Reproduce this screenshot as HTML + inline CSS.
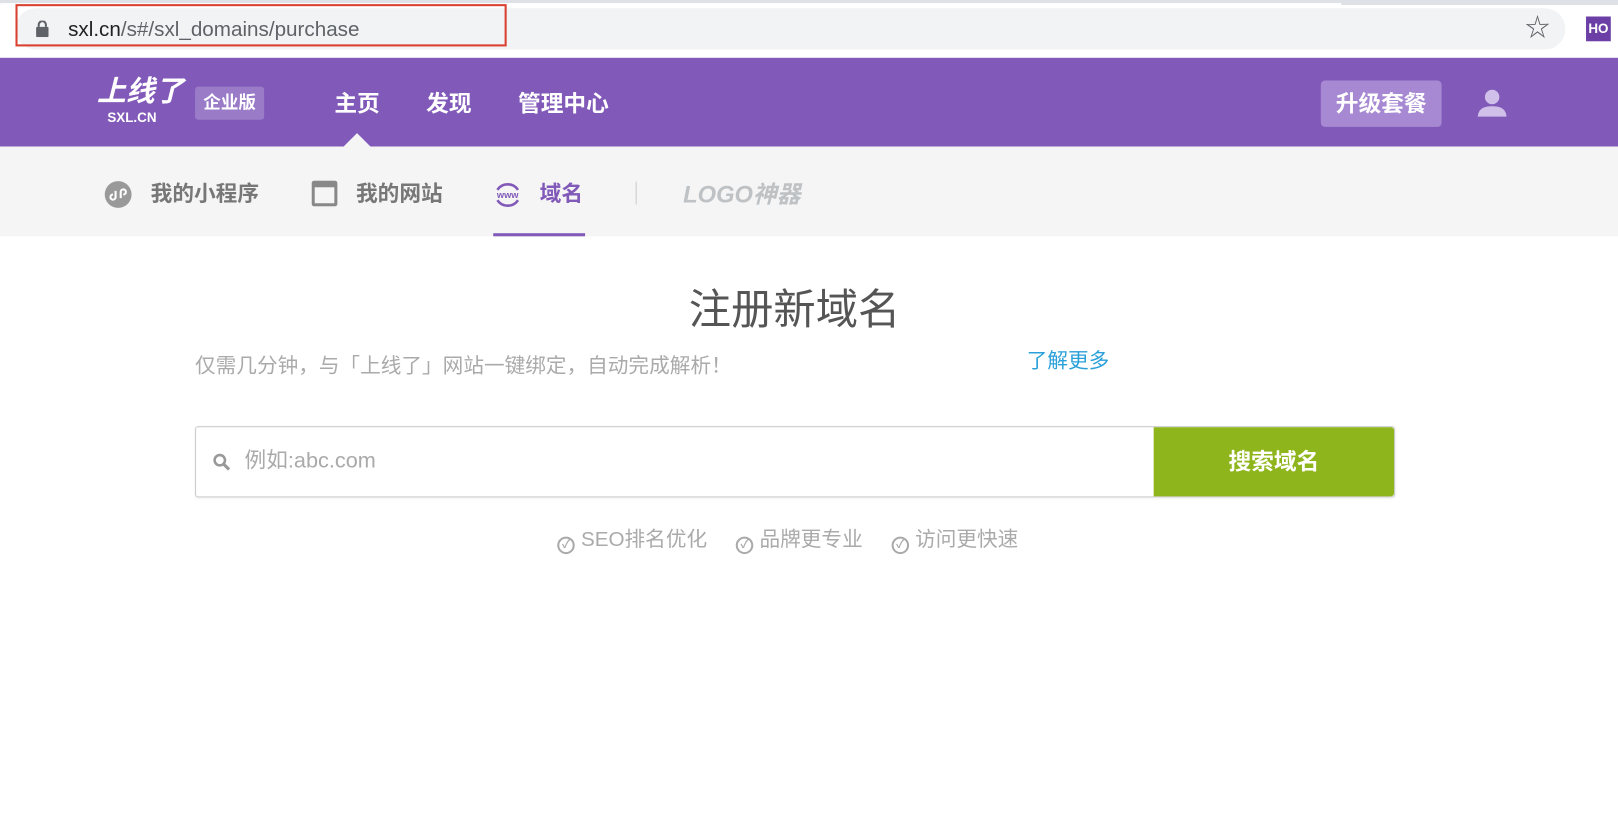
<!DOCTYPE html>
<html><head><meta charset="utf-8"><style>
*{margin:0;padding:0;box-sizing:border-box}
body{width:1618px;height:833px;background:#fff;font-family:"Liberation Sans","Noto Sans CJK SC",sans-serif;position:relative;overflow:hidden}
#w{position:absolute;left:0;top:0;width:1568px;height:808px;transform:scale(1.0319);transform-origin:0 0}
.a{position:absolute}
.b{font-weight:bold}
.ck{display:inline-block;width:17px;height:17px;border:2px solid #aaa;border-radius:50%;vertical-align:-2px;font-size:11px;line-height:13px;text-align:center;font-weight:bold;margin-right:6px}
</style></head><body><div id="w">
<div class="a" style="left:0;top:0;width:1568px;height:5px;background:#dee1e6"></div>
<div class="a" style="left:0;top:3px;width:1300px;height:5px;background:#fff;border-radius:0 0 6px 6px"></div>
<div class="a" style="left:0;top:5px;width:1568px;height:51px;background:#fff"></div>
<div class="a" style="left:15px;top:8px;width:1502px;height:40px;background:#f1f3f4;border-radius:20px"></div>
<div class="a" style="left:15px;top:4px;width:476px;height:41px;border:2px solid #d9402f"></div>
<svg class="a" style="left:34px;top:20px" width="14" height="16" viewBox="0 0 14 16"><rect x="1" y="6" width="12" height="10" rx="1" fill="#5f6368"/><path d="M3.5 6V4a3.5 3.5 0 017 0v2" stroke="#5f6368" stroke-width="2" fill="none"/></svg>
<div class="a" style="left:66px;top:17px;font-size:20px;color:#202124;line-height:24px">sxl.cn<span style="color:#5f6368">/s#/sxl_domains/purchase</span></div>
<div class="a" style="left:1478px;top:14px;font-size:24px;color:#5f6368;line-height:28px">☆</div>
<div class="a b" style="left:1537px;top:16px;width:24px;height:24px;background:#6b3fa6;color:#fff;font-size:13px;line-height:24px;text-align:center">HO</div>

<div class="a" style="left:0;top:56px;width:1568px;height:86px;background:#8159b9"></div>
<div class="a b" style="left:94px;top:73px;font-size:28px;color:#fff;font-style:italic;line-height:32px">上线了</div>
<div class="a b" style="left:104px;top:107px;font-size:13px;color:#fff;line-height:14px">SXL.CN</div>
<div class="a b" style="left:189px;top:84px;width:67px;height:32px;background:#9a7bc8;border-radius:3px;color:#fff;font-size:17px;line-height:32px;text-align:center">企业版</div>
<div class="a b" style="left:324px;top:87px;font-size:22px;color:#fff;line-height:28px">主页</div>
<div class="a b" style="left:413px;top:87px;font-size:22px;color:#fff;line-height:28px">发现</div>
<div class="a b" style="left:502px;top:87px;font-size:22px;color:#fff;line-height:28px">管理中心</div>
<div class="a" style="left:333px;top:129px;width:0;height:0;border-left:13px solid transparent;border-right:13px solid transparent;border-bottom:13px solid #f5f5f5"></div>
<div class="a b" style="left:1280px;top:78px;width:117px;height:45px;background:#a689d2;border-radius:4px;color:#fff;font-size:22px;line-height:45px;text-align:center">升级套餐</div>
<svg class="a" style="left:1430px;top:86px" width="32" height="28" viewBox="0 0 32 28"><circle cx="16" cy="8" r="7" fill="#d0bfe8"/><path d="M2 27c1-8 6-10 14-10s13 2 14 10z" fill="#d0bfe8"/></svg>

<div class="a" style="left:0;top:142px;width:1568px;height:87px;background:#f5f5f5"></div>
<svg class="a" style="left:101px;top:175px" width="27" height="27"><circle cx="13.5" cy="13.5" r="13" fill="#999"/><path d="M11 10v6a2.5 2.5 0 11-2.5-2.5M16 17v-6a2.5 2.5 0 112.5 2.5" stroke="#fff" stroke-width="2" fill="none"/></svg>
<div class="a b" style="left:146px;top:175px;font-size:21px;color:#777;line-height:28px">我的小程序</div>
<svg class="a" style="left:302px;top:175px" width="25" height="25"><rect x="1.5" y="1.5" width="22" height="22" rx="1" fill="none" stroke="#888" stroke-width="3"/><rect x="1.5" y="1.5" width="22" height="5" fill="#888"/></svg>
<div class="a b" style="left:345px;top:175px;font-size:21px;color:#777;line-height:28px">我的网站</div>
<svg class="a" style="left:477px;top:174px" width="30" height="30"><path d="M5 10a12 12 0 0120 0M5 20a12 12 0 0020 0" stroke="#8159b9" stroke-width="2.5" fill="none"/><text x="15" y="18" font-size="9" font-weight="bold" fill="#8159b9" text-anchor="middle" font-family="Liberation Sans">www</text></svg>
<div class="a b" style="left:523px;top:175px;font-size:21px;color:#8159b9;line-height:28px">域名</div>
<div class="a" style="left:478px;top:226px;width:89px;height:3px;background:#8159b9"></div>
<div class="a" style="left:616px;top:176px;width:1px;height:22px;background:#ccc"></div>
<div class="a b" style="left:662px;top:174px;font-size:23px;color:#bfc2c5;font-style:italic;line-height:28px">LOGO神器</div>

<div class="a" style="left:0;top:276px;width:1540px;text-align:center;font-size:41px;color:#555;line-height:48px">注册新域名</div>
<div class="a" style="left:189px;top:342px;font-size:20px;color:#aaa;line-height:26px">仅需几分钟，与「上线了」网站一键绑定，自动完成解析！</div>
<div class="a" style="left:995px;top:337px;font-size:20px;color:#29a0d8;line-height:26px">了解更多</div>

<div class="a" style="left:189px;top:413px;width:1163px;height:69px;border:1px solid #ccc;border-radius:3px;box-shadow:0 1px 2px rgba(0,0,0,.08)"></div>
<svg class="a" style="left:206px;top:439px" width="18" height="18"><circle cx="7" cy="7" r="5" stroke="#999" stroke-width="2.5" fill="none"/><path d="M11 11l5 5" stroke="#999" stroke-width="3"/></svg>
<div class="a" style="left:237px;top:434px;font-size:21px;color:#aaa;line-height:26px">例如:abc.com</div>
<div class="a b" style="left:1118px;top:414px;width:233px;height:67px;background:#8fb51c;color:#fff;font-size:22px;line-height:67px;text-align:center;border-radius:0 3px 3px 0">搜索域名</div>

<div class="a" style="left:540px;top:510px;font-size:20px;color:#aaa;line-height:26px;white-space:nowrap">
<span class="ck">✓</span>SEO排名优化 &nbsp;&nbsp;&nbsp;
<span class="ck">✓</span>品牌更专业 &nbsp;&nbsp;&nbsp;
<span class="ck">✓</span>访问更快速</div>
</div></body></html>
